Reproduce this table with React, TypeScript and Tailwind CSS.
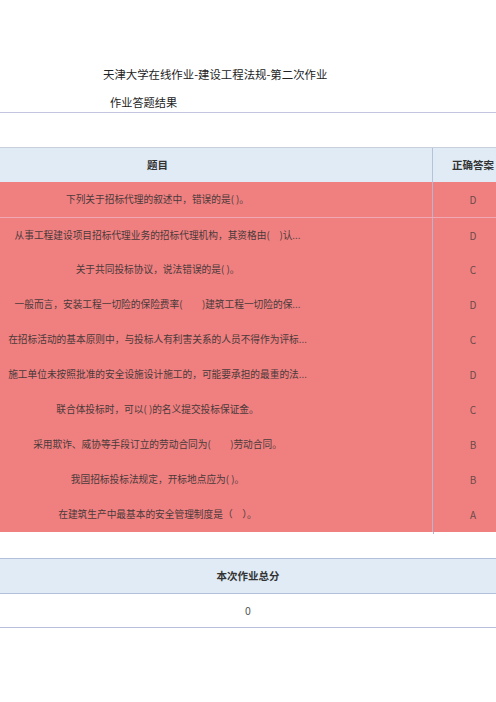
const rows: { q: string; a: string }[] = [
  { q: '下列关于招标代理的叙述中，错误的是( )。', a: 'D' },
  { q: '从事工程建设项目招标代理业务的招标代理机构，其资格由(　)认...', a: 'D' },
  { q: '关于共同投标协议，说法错误的是( )。', a: 'C' },
  { q: '一般而言，安装工程一切险的保险费率(　　)建筑工程一切险的保...', a: 'D' },
  { q: '在招标活动的基本原则中，与投标人有利害关系的人员不得作为评标...', a: 'C' },
  { q: '施工单位未按照批准的安全设施设计施工的，可能要承担的最重的法...', a: 'D' },
  { q: '联合体投标时，可以( )的名义提交投标保证金。', a: 'C' },
  { q: '采用欺诈、威协等手段订立的劳动合同为(　　)劳动合同。', a: 'B' },
  { q: '我国招标投标法规定，开标地点应为( )。', a: 'B' },
  { q: '在建筑生产中最基本的安全管理制度是（　）。', a: 'A' },
];

export default function App() {
  return (
    <div className="w-[496px] h-[702px] overflow-hidden bg-white font-['Noto_Sans_CJK_SC','Noto_Sans',sans-serif] text-[#333]">
      <div className="pt-[65px] pl-[103px] text-[11.4px] leading-[18px] text-[#222]">
        天津大学在线作业-建设工程法规-第二次作业
      </div>
      <div className="pt-[10px] pl-[110px] text-[11.2px] leading-[18px] text-[#222]">作业答题结果</div>
      <div className="mt-[1px] border-b border-[#c4c4e0]" />

      <div className="mt-[34px] w-[513px]">
        <div className="flex h-[35px] bg-[#e0ebf5] border-t border-[#c9cfdc] text-[10.5px] font-bold text-[#333]">
          <div className="w-[433px] shrink-0 pr-[117px] flex items-center justify-center border-r border-[#b7c2da]">
            题目
          </div>
          <div className="w-[80px] shrink-0 flex items-center justify-center">正确答案</div>
        </div>
        {rows.map((r, i) => (
          <div
            key={i}
            className={
              'flex h-[35px] bg-[#f08080] text-[9.7px] text-[#4a3a3a] ' +
              (i === 1 ? 'border-t border-[#f0a8b4]' : '')
            }
          >
            <div className="w-[433px] shrink-0 pr-[117px] flex items-center justify-center whitespace-nowrap border-r border-[#b9b4d2]">
              {r.q}
            </div>
            <div className="w-[80px] shrink-0 flex items-center justify-center text-[10px] text-[#6a4a4a]">{r.a}</div>
          </div>
        ))}
        <div className="w-[434px] h-[2px] border-r border-[#b9b4d2]" />
      </div>

      <div className="mt-[24px] border-t border-b border-[#b3c0dc] bg-[#e0ebf5] h-[36px] flex items-center justify-center text-[10.5px] font-bold text-[#333]">
        本次作业总分
      </div>
      <div className="h-[34px] border-b border-[#b9bedc] flex items-center justify-center text-[10.5px] text-[#555]">
        0
      </div>
    </div>
  );
}
